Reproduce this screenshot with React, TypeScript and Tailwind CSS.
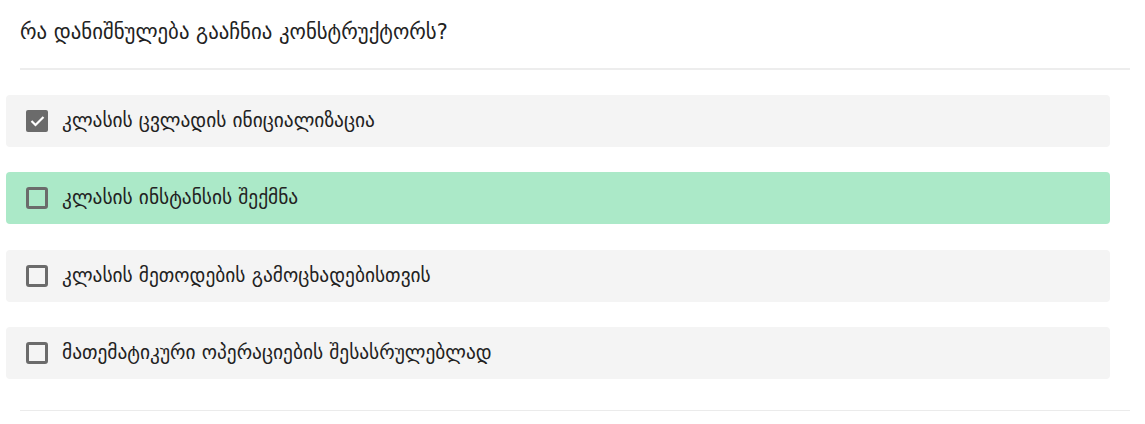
import React from 'react';

const options = [
  { text: 'კლასის ცვლადის ინიციალიზაცია', checked: true, correct: false },
  { text: 'კლასის ინსტანსის შექმნა', checked: false, correct: true },
  { text: 'კლასის მეთოდების გამოცხადებისთვის', checked: false, correct: false },
  { text: 'მათემატიკური ოპერაციების შესასრულებლად', checked: false, correct: false },
];

const App = () => {
  return (
    <div className="w-[1145px] h-[424px] bg-white text-[#222] font-['DejaVu_Sans',sans-serif]">
      {/* Question */}
      <div className="pl-[20px] pr-[15px]">
        <div className="h-[68px] flex items-center text-[20.8px] leading-none pb-[3px]">
          რა დანიშნულება გააჩნია კონსტრუქტორს?
        </div>
        <div className="h-[2px] bg-[#ededed]" />
      </div>

      {/* Options */}
      <div className="pl-[6px] pr-[35px] pt-[25px] flex flex-col gap-[25px]">
        {options.map((o, i) => (
          <div
            key={i}
            className={
              'h-[52px] rounded-[4px] flex items-center pl-[20px] gap-[14px] ' +
              (o.correct ? 'bg-[#abe9c8]' : 'bg-[#f4f4f4]') +
              (i === 2 ? ' mt-[1px]' : '')
            }
          >
            {o.checked ? (
              <div className="w-[22px] h-[22px] rounded-[2px] bg-[#6b6b6b] flex items-center justify-center">
                <svg width="15" height="12" viewBox="0 0 15 12" fill="none">
                  <path d="M1.5 6 L5.5 10 L13.5 2" stroke="white" strokeWidth="2.2" />
                </svg>
              </div>
            ) : (
              <div className="w-[22px] h-[22px] rounded-[3px] border-[3px] border-[#6b6b6b]" />
            )}
            <span className="text-[19.4px] leading-none">{o.text}</span>
          </div>
        ))}
      </div>

      <div className="pl-[20px] pr-[15px] pt-[31px]">
        <div className="h-[1px] bg-[#ebebeb]" />
      </div>
    </div>
  );
};

export default App;
